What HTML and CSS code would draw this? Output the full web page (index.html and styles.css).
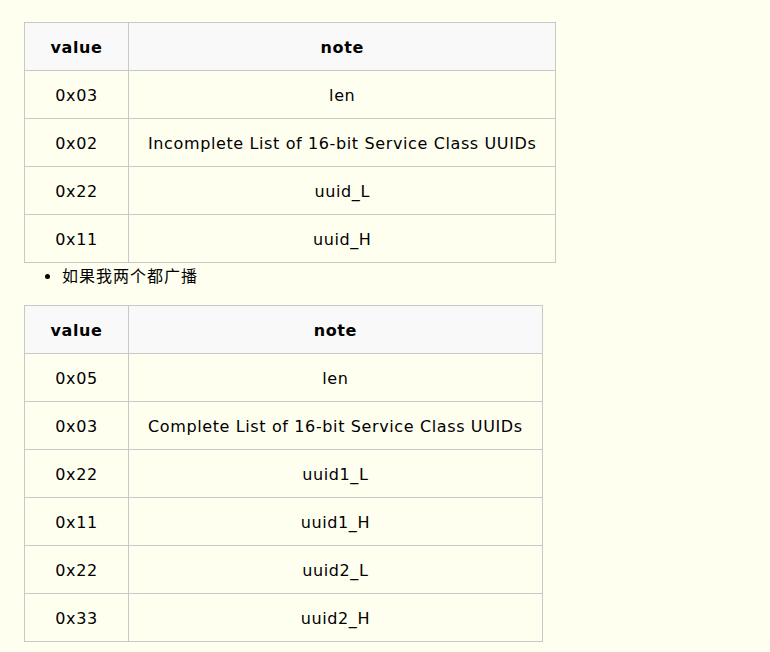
FILE: index.html
```html
<!DOCTYPE html>
<html>
<head>
<meta charset="utf-8">
<link rel="stylesheet" href="styles.css">
</head>
<body>
<div class="page">
  <ul class="list list-top">
    <li>如果只广播一个服务则如下：</li>
  </ul>
  <table class="tbl">
    <thead>
      <tr><th class="c-value">value</th><th>note</th></tr>
    </thead>
    <tbody>
      <tr><td>0x03</td><td>len</td></tr>
      <tr><td>0x02</td><td>Incomplete List of 16-bit Service Class UUIDs</td></tr>
      <tr><td>0x22</td><td>uuid_L</td></tr>
      <tr><td>0x11</td><td>uuid_H</td></tr>
    </tbody>
  </table>
  <ul class="list list-mid">
    <li>如果我两个都广播</li>
  </ul>
  <table class="tbl">
    <thead>
      <tr><th class="c-value">value</th><th>note</th></tr>
    </thead>
    <tbody>
      <tr><td>0x05</td><td>len</td></tr>
      <tr><td>0x03</td><td>Complete List of 16-bit Service Class UUIDs</td></tr>
      <tr><td>0x22</td><td>uuid1_L</td></tr>
      <tr><td>0x11</td><td>uuid1_H</td></tr>
      <tr><td>0x22</td><td>uuid2_L</td></tr>
      <tr><td>0x33</td><td>uuid2_H</td></tr>
    </tbody>
  </table>
</div>
</body>
</html>
```

FILE: styles.css
```css
html, body {
  margin: 0;
  padding: 0;
  background: #fffff0;
}
body {
  font-family: "DejaVu Sans", Verdana, "Noto Sans CJK SC", sans-serif;
  font-size: 16px;
  color: #000;
  overflow: hidden;
  height: 652px;
}
.page {
  padding-left: 24px;
  margin-top: -21px;
}
.list {
  margin: 0;
  padding-left: 38px;
  font-family: "DejaVu Sans", "Noto Sans CJK SC", sans-serif;
  line-height: 27px;
  letter-spacing: 1px;
}
.list-mid {
  margin-bottom: -1px;
}
.list li {
  margin: 0;
}
.tbl {
  border-collapse: collapse;
  margin: 16px 0 0 0;
  background: #fffff0;
  letter-spacing: 0.62px;
}
.tbl th, .tbl td {
  border: 1px solid #c8c8c8;
  padding: 13px 19px 11px;
  line-height: 23px;
  text-align: center;
  white-space: nowrap;
}
.tbl th {
  background: #f9f9f9;
  font-weight: bold;
}
.tbl .c-value {
  width: 65px;
}
```
